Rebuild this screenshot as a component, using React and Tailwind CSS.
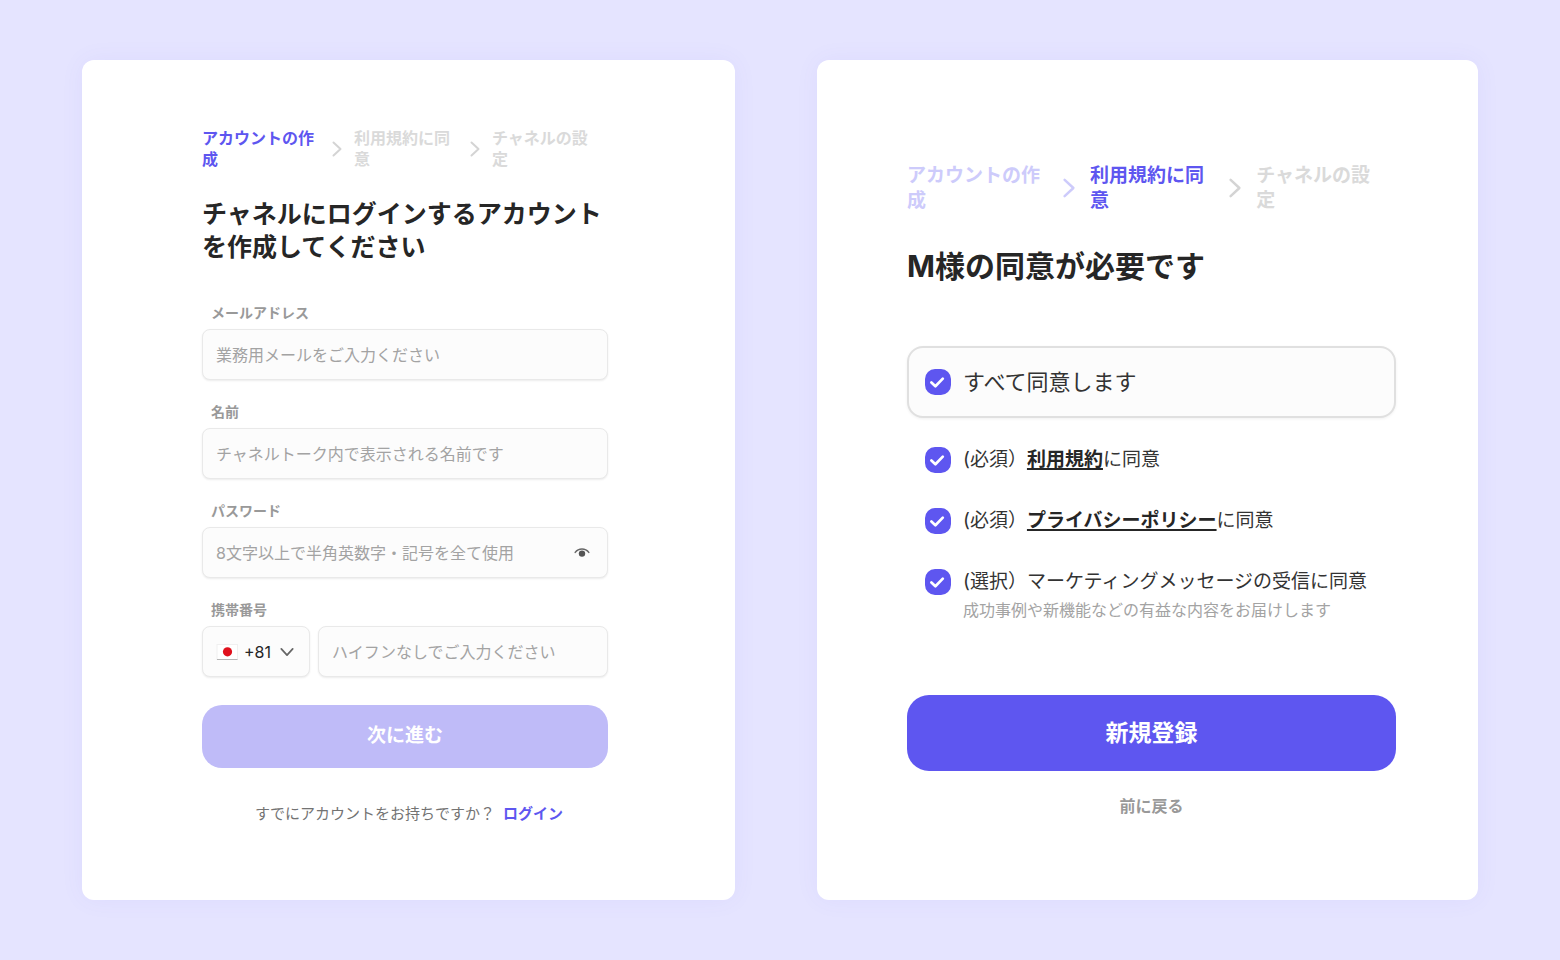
import { useState } from "react";

const STEPS = ["アカウントの作成", "利用規約に同意", "チャネルの設定"];

const FIELD =
  "w-full h-[51px] rounded-lg border border-[#e9e9e9] bg-[#fcfcfc] shadow-[0_1px_2px_rgba(0,0,0,0.08)] text-[16px] text-[#262626] placeholder:text-[#a3a3a3] outline-none focus:border-[#5e56f0]";

function Chevron({ className }) {
  return (
    <svg viewBox="0 0 16 16" fill="none" stroke="currentColor" strokeLinecap="round" strokeLinejoin="round" className={className}>
      <path d="M4.5 1.5 L11.5 8 L4.5 14.5" />
    </svg>
  );
}

function Steps({ current, textClass, iconClass }) {
  const color = (i) => {
    if (i === current) return "text-[#5e56f0]";
    return i < current ? "text-[#cdcbfb]" : "text-[#dadada]";
  };

  return (
    <ol className={`grid grid-cols-[152fr_138fr_116fr] font-bold ${textClass}`}>
      {STEPS.map((step, i) => (
        <li key={step} className={`flex items-center ${color(i)}`}>
          <span className="flex-1 pr-2">{step}</span>
          {i < STEPS.length - 1 && (
            <Chevron className={`shrink-0 stroke-2 ${i < current ? "text-[#cdcbfb]" : "text-[#d4d4d4]"} ${iconClass}`} />
          )}
        </li>
      ))}
    </ol>
  );
}

function Field({ id, label, children }) {
  return (
    <div className="flex flex-col gap-[6px]">
      <label htmlFor={id} className="pl-[9px] text-[14px] leading-5 font-bold text-[#999999]">
        {label}
      </label>
      {children}
    </div>
  );
}

function EyeIcon() {
  return (
    <svg viewBox="0 0 16 12" fill="none" className="w-4 h-3">
      <path d="M1.2 5.4 C4.6 0.8 11.4 0.8 14.8 5.4" stroke="#666666" strokeWidth="1.5" strokeLinecap="round" />
      <circle cx="8" cy="6.6" r="3.2" fill="#555555" />
    </svg>
  );
}

function JapanFlag() {
  return (
    <svg viewBox="0 0 22 18" className="w-[22px] h-[18px]">
      <rect x="1" y="1.5" width="20.5" height="15" fill="#ffffff" stroke="#f0f0f0" strokeWidth="1" />
      <path d="M1 16.5 H21.5" stroke="#b5b5b5" strokeWidth="1" />
      <circle cx="11.5" cy="8.8" r="4.6" fill="#e0101c" />
    </svg>
  );
}

function AccountForm() {
  const [form, setForm] = useState({ email: "", name: "", password: "", country: "+81", phone: "" });
  const [showPassword, setShowPassword] = useState(false);

  const handleChange = (e) => {
    setForm({ ...form, [e.target.name]: e.target.value });
  };

  return (
    <form
      onSubmit={(e) => e.preventDefault()}
      className="bg-white rounded-xl shadow-[0_0_24px_rgba(94,86,240,0.06)] pt-[68px] pb-[76px] pl-[120px] pr-[127px]"
    >
      <Steps current={0} textClass="text-[16px] leading-[21px]" iconClass="w-4 h-4 mr-[9px]" />

      <h1 className="mt-7 text-[25px] leading-[33px] font-bold text-[#262626]">
        チャネルにログインするアカウントを作成してください
      </h1>

      <div className="mt-[39px] flex flex-col gap-[22px]">
        <Field id="email" label="メールアドレス">
          <input id="email" name="email" type="email" value={form.email} onChange={handleChange} placeholder="業務用メールをご入力ください" className={`${FIELD} px-[13px]`} />
        </Field>

        <Field id="name" label="名前">
          <input id="name" name="name" type="text" value={form.name} onChange={handleChange} placeholder="チャネルトーク内で表示される名前です" className={`${FIELD} px-[13px]`} />
        </Field>

        <Field id="password" label="パスワード">
          <div className="grid items-center">
            <input
              id="password"
              name="password"
              type={showPassword ? "text" : "password"}
              value={form.password}
              onChange={handleChange}
              placeholder="8文字以上で半角英数字・記号を全て使用"
              className={`${FIELD} col-start-1 row-start-1 pl-[13px] pr-12`}
            />
            <button
              type="button"
              aria-label="パスワードを表示"
              onClick={() => setShowPassword(!showPassword)}
              className="col-start-1 row-start-1 justify-self-end mr-[18px] cursor-pointer"
            >
              <EyeIcon />
            </button>
          </div>
        </Field>

        <Field id="phone" label="携帯番号">
          <div className="flex gap-2">
            <div className="grid items-center w-[108px] shrink-0">
              <select
                name="country"
                aria-label="国番号"
                value={form.country}
                onChange={handleChange}
                className={`${FIELD} appearance-none col-start-1 row-start-1 pl-[41px]`}
              >
                <option value="+81">+81</option>
                <option value="+82">+82</option>
                <option value="+1">+1</option>
              </select>
              <span className="col-start-1 row-start-1 flex items-center justify-between pl-[14px] pr-4 pointer-events-none">
                <JapanFlag />
                <Chevron className="w-[14px] h-[14px] rotate-90 stroke-2 text-[#666666]" />
              </span>
            </div>
            <input id="phone" name="phone" type="tel" value={form.phone} onChange={handleChange} placeholder="ハイフンなしでご入力ください" className={`${FIELD} px-[13px]`} />
          </div>
        </Field>
      </div>

      <button type="submit" className="mt-7 w-full h-[63px] rounded-[20px] bg-[#bfbbf8] text-white text-[19px] font-bold cursor-pointer">
        次に進む
      </button>

      <p className="mt-9 pl-2 flex justify-center gap-2 text-[15px] leading-5 text-[#737373]">
        すでにアカウントをお持ちですか？
        <a href="#login" className="font-bold text-[#5e56f0]">
          ログイン
        </a>
      </p>
    </form>
  );
}

function Checkbox({ id, checked, onChange }) {
  return (
    <span className="grid shrink-0 w-[26px] h-[26px]">
      <input
        id={id}
        type="checkbox"
        checked={checked}
        onChange={onChange}
        className="appearance-none col-start-1 row-start-1 rounded-[10px] border-2 border-[#dddddd] checked:border-[#5e56f0] checked:bg-[#5e56f0] cursor-pointer"
      />
      {checked && (
        <svg viewBox="0 0 26 26" fill="none" className="col-start-1 row-start-1 pointer-events-none">
          <path d="M6.4 13.4 L10.4 17.2 L17.8 9.6" stroke="#ffffff" strokeWidth="2.7" strokeLinecap="round" strokeLinejoin="round" />
        </svg>
      )}
    </span>
  );
}

function TermsForm() {
  const [agreed, setAgreed] = useState({ terms: true, privacy: true, marketing: true });
  const allAgreed = Object.values(agreed).every(Boolean);

  const toggle = (key) => setAgreed({ ...agreed, [key]: !agreed[key] });
  const toggleAll = () => {
    setAgreed({ terms: !allAgreed, privacy: !allAgreed, marketing: !allAgreed });
  };

  return (
    <form
      onSubmit={(e) => e.preventDefault()}
      className="bg-white rounded-xl shadow-[0_0_24px_rgba(94,86,240,0.06)] pt-[103px] pb-[76px] pl-[90px] pr-[82px]"
    >
      <Steps current={1} textClass="text-[19px] leading-[25px]" iconClass="w-5 h-5 mr-[11px]" />

      <h1 className="mt-[35px] text-[30px] leading-9 font-bold text-[#262626]">M様の同意が必要です</h1>

      <div className="mt-[62px] h-[72px] px-4 flex items-center gap-3 rounded-2xl border-2 border-[#e0e0e0] bg-[#fcfcfc] shadow-[0_1px_3px_rgba(0,0,0,0.06)]">
        <Checkbox id="all" checked={allAgreed} onChange={toggleAll} />
        <label htmlFor="all" className="text-[22px] leading-8 text-[#333333]">
          すべて同意します
        </label>
      </div>

      <ul className="mt-7 pl-[18px] flex flex-col gap-[33px] text-[19px] leading-7 text-[#333333]">
        <li className="flex gap-3">
          <span className="pt-px h-7">
            <Checkbox id="terms" checked={agreed.terms} onChange={() => toggle("terms")} />
          </span>
          <label htmlFor="terms">
            (必須）
            <a href="#terms" className="font-bold text-[#262626] underline underline-offset-2 decoration-2">利用規約</a>
            に同意
          </label>
        </li>
        <li className="flex gap-3">
          <span className="pt-px h-7">
            <Checkbox id="privacy" checked={agreed.privacy} onChange={() => toggle("privacy")} />
          </span>
          <label htmlFor="privacy">
            (必須）
            <a href="#privacy" className="font-bold text-[#262626] underline underline-offset-2 decoration-2">プライバシーポリシー</a>
            に同意
          </label>
        </li>
        <li className="flex gap-3">
          <span className="pt-px h-7">
            <Checkbox id="marketing" checked={agreed.marketing} onChange={() => toggle("marketing")} />
          </span>
          <div>
            <label htmlFor="marketing">(選択）マーケティングメッセージの受信に同意</label>
            <p className="mt-[2px] text-[16px] leading-6 text-[#a3a3a3]">
              成功事例や新機能などの有益な内容をお届けします
            </p>
          </div>
        </li>
      </ul>

      <button type="submit" className="mt-[73px] w-full h-[76px] rounded-[22px] bg-[#5e56f0] text-white text-[23px] font-bold cursor-pointer">
        新規登録
      </button>

      <div className="mt-[23px] flex justify-center">
        <button type="button" className="text-[16px] leading-6 font-bold text-[#999999] cursor-pointer">
          前に戻る
        </button>
      </div>
    </form>
  );
}

function App() {
  return (
    <main
      lang="ja"
      className="min-h-screen grid grid-cols-[653fr_661fr] gap-[82px] px-[82px] py-[60px] bg-[#e5e4ff] font-['Inter','Noto_Sans_CJK_JP',sans-serif]"
    >
      <AccountForm />
      <TermsForm />
    </main>
  );
}

export default App;
